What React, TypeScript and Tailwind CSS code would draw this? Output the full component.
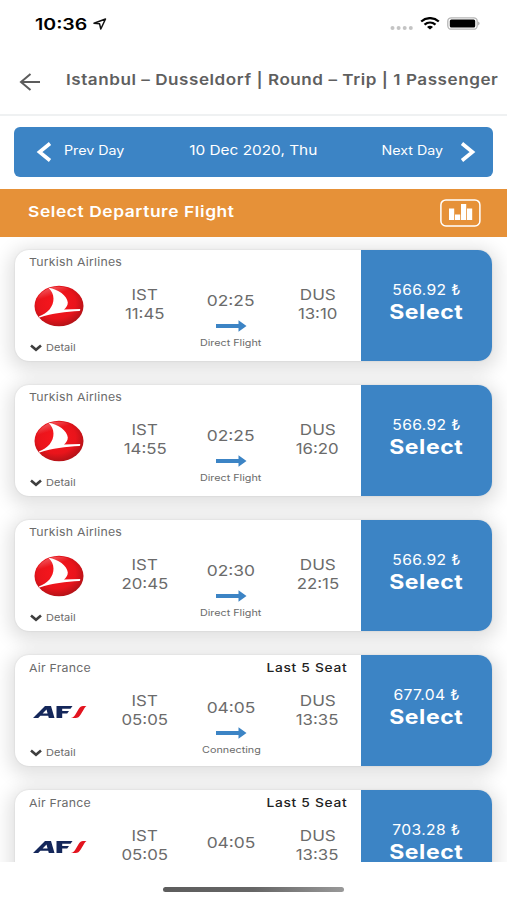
import React from "react"
import clsx from "clsx"

type Flight = {
  id: number
  airline: "Turkish Airlines" | "Air France"
  departure: string
  arrival: string
  duration: string
  stops: string
  price: string
  note?: string
}

const flights: Flight[] = [
  { id: 1, airline: "Turkish Airlines", departure: "11:45", arrival: "13:10", duration: "02:25", stops: "Direct Flight", price: "566.92" },
  { id: 2, airline: "Turkish Airlines", departure: "14:55", arrival: "16:20", duration: "02:25", stops: "Direct Flight", price: "566.92" },
  { id: 3, airline: "Turkish Airlines", departure: "20:45", arrival: "22:15", duration: "02:30", stops: "Direct Flight", price: "566.92" },
  { id: 4, airline: "Air France", departure: "05:05", arrival: "13:35", duration: "04:05", stops: "Connecting", price: "677.04", note: "Last 5 Seat" },
  { id: 5, airline: "Air France", departure: "05:05", arrival: "13:35", duration: "04:05", stops: "Connecting", price: "703.28", note: "Last 5 Seat" },
]

const TurkishLogo = () => (
  <svg width="50" height="42" viewBox="0 0 50 42">
    <defs>
      <radialGradient id="thy" cx="0.45" cy="0.42" r="0.6">
        <stop offset="0" stopColor="#f8161d" />
        <stop offset="0.65" stopColor="#e9141b" />
        <stop offset="1" stopColor="#b01217" />
      </radialGradient>
      <linearGradient id="shine" x1="0.1" y1="0" x2="0.5" y2="1">
        <stop offset="0" stopColor="#fff" stopOpacity="0.4" />
        <stop offset="0.3" stopColor="#fff" stopOpacity="0" />
      </linearGradient>
    </defs>
    <ellipse cx="25" cy="21" rx="24.5" ry="20.3" fill="url(#thy)" />
    <ellipse cx="24.5" cy="20" rx="22.5" ry="18.3" fill="url(#shine)" />
    <path
      d="M14.500 2.800C24 4 33.300 11 33.800 17.500C33.900 20.500 31.800 23 30 24.600L45.800 24C46.600 24.200 46.400 25.800 45.300 26.100C32 26.900 18 28.500 5.600 32.600C4.600 32.800 4.400 31.600 5.300 31.200C9 29.600 13 27.400 15.500 24.400C21 18 21 9 14.500 2.800Z"
      fill="#fff"
    />
  </svg>
)

const AirFranceLogo = () => (
  <svg width="54" height="14" viewBox="0 0 54 14">
    <path d="M0 13L12 1H18L21.500 13H15.800L15.200 10.800H7.400L5.200 13ZM9.600 8.500H14.600L13.500 4.600Z" fill="#14275a" />
    <path d="M23.500 13V1H39.500L37.500 3.700H29.200V6H36L34.200 8.600H29.200V13Z" fill="#14275a" />
    <path d="M38 13C40.500 12.700 41.500 11 43 8.500L45.500 4.300C47 1.900 48.200 1 50 1H53.500C52.500 1.600 51.800 2.700 51 4L47.700 9.500C46.200 12 44.800 13 42.500 13Z" fill="#e3141f" />
  </svg>
)

const StatusBar = () => (
  <div className="flex h-[47px] shrink-0 items-center justify-between pl-[35px] pr-[27px] text-black">
    <div className="flex items-center">
      <span className="w-[58px] origin-left scale-x-[1.22] whitespace-nowrap text-[16px] leading-none font-semibold">
        10:36
      </span>
      <svg width="14" height="12" viewBox="0 0 14 12" fill="none">
        <path d="M1 5.300L12.500 1L7.800 11L6.600 5.800Z" stroke="#111" strokeWidth="1.500" strokeLinejoin="round" />
      </svg>
    </div>
    <div className="flex items-center">
      <svg width="24" height="6" viewBox="0 0 24 6" className="mt-2 mr-[6px]" fill="#c4c4c4">
        <circle cx="2.500" cy="3" r="2" />
        <circle cx="8.600" cy="3" r="2" />
        <circle cx="14.700" cy="3" r="2" />
        <circle cx="20.800" cy="3" r="2" />
      </svg>
      <svg width="20" height="13" viewBox="0 0 20 13" fill="none" stroke="#000" strokeWidth="2.300">
        <path d="M1.200 4.500C6.200 0 13.800 0 18.800 4.500" />
        <path d="M4.500 7.700C7.800 4.800 12.200 4.800 15.500 7.700" />
        <path d="M7 9.900C8.800 8.500 11.200 8.500 13 9.900L10 12.500Z" fill="#000" stroke="none" />
      </svg>
      <svg width="33" height="13" viewBox="0 0 33 13" className="ml-[7px]">
        <rect x="0.800" y="0.800" width="29.400" height="11.400" rx="3.500" fill="#fff" stroke="#b5b5b5" strokeWidth="1.300" />
        <rect x="2.800" y="2.400" width="25.400" height="8.200" rx="1.500" fill="#000" />
        <path d="M31.300 4.600C32.900 5.300 32.900 7.700 31.300 8.400Z" fill="#999" />
      </svg>
    </div>
  </div>
)

const FlightCard = ({ flight }: { flight: Flight }) => {
  const isTurkish = flight.airline === "Turkish Airlines"

  return (
    <div className="flex h-[111px] shrink-0 overflow-hidden rounded-[14px] bg-white shadow-[0_4px_18px_6px_rgba(0,0,0,0.12),0_0_2px_rgba(0,0,0,0.12)]">
      <div className="flex w-[346px] flex-col text-[#6b6b6b]">
        <div className={clsx("flex h-6 items-center justify-between pr-[14px] pl-[14px]", !isTurkish && "pt-[2px]")}>
          <span className="origin-left scale-x-[1.12] text-[11px] leading-none tracking-[0.200px]">{flight.airline}</span>
          {flight.note && (
            <span className="origin-right scale-x-[1.15] text-[12px] leading-none font-medium tracking-[0.600px] text-[#222]">
              {flight.note}
            </span>
          )}
        </div>
        <div className="flex flex-1">
          <div className="flex w-[88px] flex-col">
            <div className={clsx("flex h-[66px] items-center", isTurkish ? "pb-[2px] pl-[19px]" : "pl-[18px]")}>
              {isTurkish ? <TurkishLogo /> : <AirFranceLogo />}
            </div>
            <div className="flex h-[15px] items-center pl-[15px]">
              <svg width="12" height="8" viewBox="0 0 12 8" fill="none" className="mr-1">
                <path d="M1 1.500L6 5.800L11 1.500" stroke="#3f3f3f" strokeWidth="2.600" />
              </svg>
              <span className="origin-left scale-x-[1.16] text-[9.500px] leading-none">Detail</span>
            </div>
          </div>
          <div className={clsx("flex w-[84px] flex-col items-center text-[15px] leading-[19.500px]", isTurkish ? "pt-[11px]" : "pt-[12px]")}>
            <span className="scale-x-[1.12]">IST</span>
            <span className="-mt-[0.500px] scale-x-[1.12]">{flight.departure}</span>
          </div>
          <div className={clsx("flex w-[88px] flex-col items-center", isTurkish ? "pt-[17px]" : "pt-[19px]")}>
            <span className="scale-x-[1.16] text-[15px] leading-[20px]">{flight.duration}</span>
            <svg width="31" height="12" viewBox="0 0 31 12" className="mt-[9px]">
              <path d="M0 4.100H22.500V0.300L30.500 6L22.500 11.700V7.900H0Z" fill="#3c84c5" />
            </svg>
            <span className="mt-[6px] scale-x-[1.2] text-[9px] leading-[10px] whitespace-nowrap">{flight.stops}</span>
          </div>
          <div className={clsx("flex w-[85px] flex-col items-center text-[15px] leading-[19.500px]", isTurkish ? "pt-[11px]" : "pt-[12px]")}>
            <span className="scale-x-[1.14]">DUS</span>
            <span className="-mt-[0.500px] scale-x-[1.12]">{flight.arrival}</span>
          </div>
        </div>
      </div>
      <button className="flex flex-1 flex-col items-center bg-[#3c84c5] pt-[32px] text-white">
        <span className="scale-x-[1.12] text-[14px] leading-[16px] tracking-[0.300px]">{flight.price} ₺</span>
        <span className="mt-[3px] scale-x-[1.15] text-[20px] leading-[22px] font-bold tracking-[0.500px]">Select</span>
      </button>
    </div>
  )
}

const App = () => {
  return (
    <div className="flex h-[900px] w-[507px] flex-col overflow-hidden bg-white font-['Inter','Liberation_Sans',sans-serif]">
      <StatusBar />
      <header className="flex h-[69px] shrink-0 items-center border-b-2 border-[#eff1f2] pb-[2px] pl-[19px]">
        <svg width="22" height="18" viewBox="0 0 22 18" fill="none" className="mt-1" stroke="#5c5c5c" strokeWidth="2">
          <path d="M21 9H2M11.500 1L2 9L11.500 17" />
        </svg>
        <h1 className="ml-[25px] origin-left scale-x-[1.14] text-[15px] leading-none font-semibold tracking-[0.470px] whitespace-nowrap text-[#5f5f5f]">
          Istanbul – Dusseldorf | Round – Trip | 1 Passenger
        </h1>
      </header>
      <nav className="mx-[14px] mt-[11px] flex h-[50px] shrink-0 items-center justify-between rounded-[6px] bg-[#3c84c5] pr-[17px] pl-[22px] text-white">
        <div className="flex items-center">
          <svg width="16" height="20" viewBox="0 0 16 20" fill="none">
            <path d="M14 1.500L3.500 10L14 18.500" stroke="#fff" strokeWidth="3.600" />
          </svg>
          <span className="mb-[2px] ml-[12px] origin-left scale-x-[1.14] text-[12.500px] leading-none">Prev Day</span>
        </div>
        <span className="mb-[3px] scale-x-[1.14] text-[13.500px] leading-none">10 Dec 2020, Thu</span>
        <div className="flex items-center">
          <span className="mr-[17px] mb-[2px] origin-right scale-x-[1.14] text-[12.500px] leading-none">Next Day</span>
          <svg width="16" height="20" viewBox="0 0 16 20" fill="none">
            <path d="M2 1.500L12.500 10L2 18.500" stroke="#fff" strokeWidth="3.600" />
          </svg>
        </div>
      </nav>
      <div className="mt-[12px] flex h-[48px] shrink-0 items-center justify-between bg-[#e69138] pr-[26px] pl-[28px]">
        <h2 className="mb-[4px] origin-left scale-x-[1.16] text-[15px] leading-none font-semibold tracking-[0.500px] text-white">
          Select Departure Flight
        </h2>
        <svg width="41" height="28" viewBox="0 0 41 28" fill="#fff">
          <rect x="0.900" y="0.900" width="39" height="26" rx="5" fill="none" stroke="#fff" strokeWidth="1.500" />
          <path d="M9 9.500h5.200v11.500H9zM15 15.500h5.200v5.500H15zM21 5h5.200v16H21zM27 9.500h5.200v11.500H27z" />
        </svg>
      </div>
      <main className="flex h-[625px] shrink-0 flex-col gap-6 overflow-hidden pt-[13px] pr-[15px] pl-[15px]">
        {flights.map((flight) => (
          <FlightCard key={flight.id} flight={flight} />
        ))}
      </main>
      <div className="flex flex-1 justify-center pt-[25px]">
        <div className="h-[5px] w-[181px] rounded-full bg-linear-to-r from-[#5d5d5d] via-[#666] to-[#999]" />
      </div>
    </div>
  )
}

export default App
